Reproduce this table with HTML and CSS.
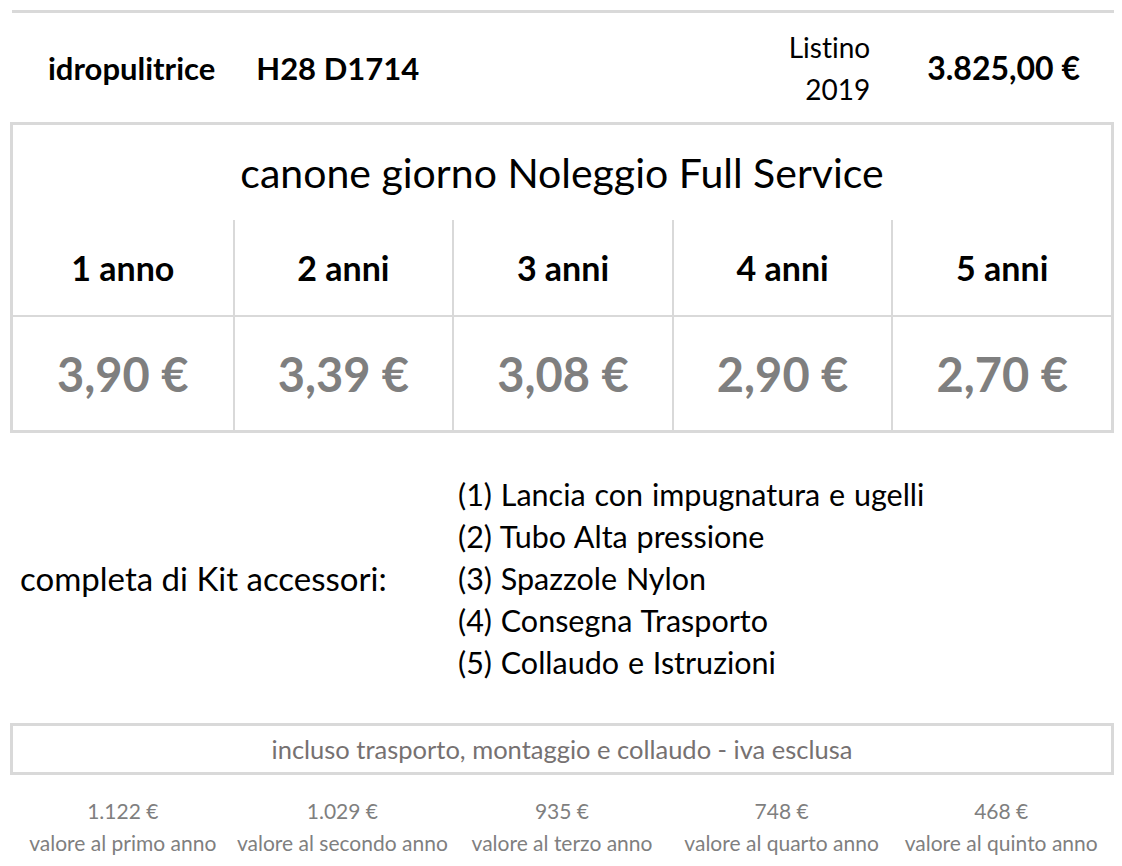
FILE: index.html
```html
<!DOCTYPE html>
<html lang="it">
<head>
<meta charset="utf-8">
<title>Noleggio idropulitrice</title>
<link rel="stylesheet" href="styles.css">
</head>
<body>
<div class="page">
  <div class="rule"></div>
  <header class="header">
    <div class="product"><span class="name">idropulitrice</span><span class="code">H28 D1714</span></div>
    <div class="listino">Listino<br>2019</div>
    <div class="price">3.825,00 €</div>
  </header>

  <section class="box">
    <h1 class="title">canone giorno Noleggio Full Service</h1>
    <div class="grid">
      <div class="head">1 anno</div>
      <div class="head">2 anni</div>
      <div class="head">3 anni</div>
      <div class="head">4 anni</div>
      <div class="head">5 anni</div>
      <div class="val">3,90 €</div>
      <div class="val">3,39 €</div>
      <div class="val">3,08 €</div>
      <div class="val">2,90 €</div>
      <div class="val">2,70 €</div>
    </div>
  </section>

  <section class="kit">
    <div class="kit-label">completa di Kit accessori:</div>
    <ul class="kit-list">
      <li>(1) Lancia con impugnatura e ugelli</li>
      <li>(2) Tubo Alta pressione</li>
      <li>(3) Spazzole Nylon</li>
      <li>(4) Consegna Trasporto</li>
      <li>(5) Collaudo e Istruzioni</li>
    </ul>
  </section>

  <div class="note">incluso trasporto, montaggio e collaudo - iva esclusa</div>

  <div class="values">
    <div class="v"><span class="amt">1.122 €</span><span class="lbl">valore al primo anno</span></div>
    <div class="v"><span class="amt">1.029 €</span><span class="lbl">valore al secondo anno</span></div>
    <div class="v"><span class="amt">935 €</span><span class="lbl">valore al terzo anno</span></div>
    <div class="v"><span class="amt">748 €</span><span class="lbl">valore al quarto anno</span></div>
    <div class="v"><span class="amt">468 €</span><span class="lbl">valore al quinto anno</span></div>
  </div>
</div>
</body>
</html>
```

FILE: styles.css
```css
* { box-sizing: border-box; }

body {
  margin: 0;
  background: #ffffff;
  color: #000000;
  font-family: Lato, "Liberation Sans", sans-serif;
  font-variant-ligatures: no-common-ligatures;
}

.page {
  width: 1104px;
  margin-left: 10px;
  padding-top: 10px;
}

.rule {
  height: 3px;
  margin-left: 2px;
  background: #d9d9d9;
}

.header {
  display: flex;
  align-items: center;
  height: 109px;
  padding-right: 34px;
}

.product {
  flex: 1;
  padding-left: 38px;
  font-size: 31px;
  font-weight: 700;
}

.product .code {
  margin-left: 41px;
}

.listino {
  text-align: right;
  font-size: 28px;
  line-height: 42px;
}

.price {
  margin-left: 57px;
  font-size: 32px;
  font-weight: 700;
}

.box {
  border: 3px solid #d9d9d9;
}

.title {
  margin: 0;
  height: 95px;
  display: flex;
  align-items: center;
  justify-content: center;
  font-size: 41px;
  font-weight: 400;
}

.grid {
  display: grid;
  grid-template-columns: repeat(5, 1fr);
}

.head,
.val {
  display: flex;
  align-items: center;
  justify-content: center;
  border-left: 2px solid #d9d9d9;
}

.head:nth-child(5n+1),
.val:nth-child(5n+1) {
  border-left: none;
}

.head {
  height: 97px;
  border-bottom: 2px solid #d9d9d9;
  font-size: 34px;
  font-weight: 700;
}

.val {
  height: 113px;
  font-size: 47px;
  font-weight: 700;
  color: #7f7f7f;
}

.kit {
  display: flex;
  align-items: center;
  height: 290px;
}

.kit-label {
  width: 448px;
  padding-left: 10px;
  font-size: 33px;
}

.kit-list {
  list-style: none;
  margin: 0;
  padding: 0;
  font-size: 30.5px;
  line-height: 42px;
  word-spacing: 1px;
}

.note {
  height: 52px;
  border: 3px solid #d9d9d9;
  display: flex;
  align-items: center;
  justify-content: center;
  font-size: 25.5px;
  color: #767171;
}

.values {
  display: grid;
  grid-template-columns: repeat(5, 1fr);
  padding: 0 3px;
  margin-top: 20px;
}

.v {
  display: flex;
  flex-direction: column;
  align-items: center;
  color: #7f7f7f;
  font-size: 21px;
  line-height: 32px;
}
```
